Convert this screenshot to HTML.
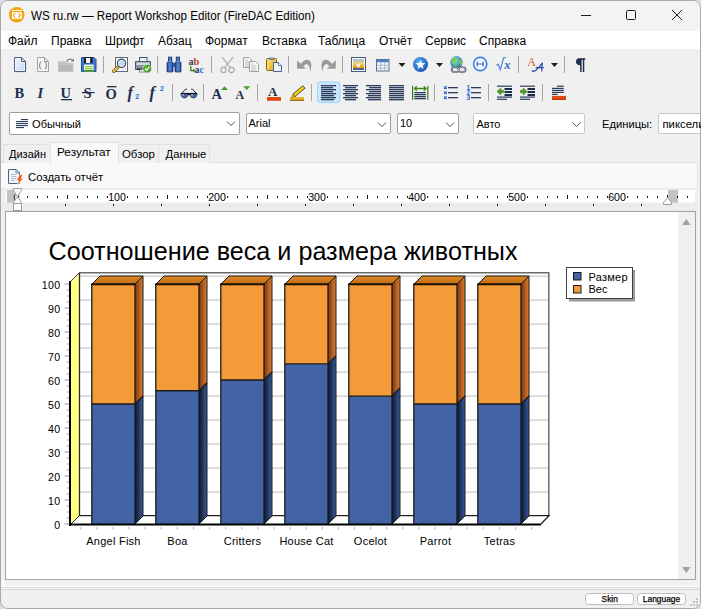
<!DOCTYPE html>
<html><head><meta charset="utf-8">
<style>
html,body{margin:0;padding:0;width:701px;height:609px;overflow:hidden;background:#dcdcdc;}
body{position:relative;font-family:"Liberation Sans",sans-serif;color:#000;}
.a{position:absolute;}
.t{position:absolute;white-space:nowrap;font-size:12px;line-height:14px;}
#win{position:absolute;left:0;top:0;width:699px;height:607px;border:1px solid #a9a9a9;border-radius:8px 8px 8px 8px;background:#f0f0f0;overflow:hidden;}
svg{position:absolute;left:0;top:0;}
</style></head><body>
<div id="win">
<svg width="701" height="609" style="left:-1px;top:-1px"><rect x="1" y="1" width="699" height="30" fill="#f3f3f3"/><rect x="1" y="31" width="699" height="18" fill="#ffffff"/><circle cx="16.7" cy="14.7" r="7.8" fill="#f5a50f"/><rect x="12" y="10" width="9.8" height="1" fill="#fff"/><rect x="12" y="12.2" width="9.8" height="6.6" fill="#fff"/><path d="M15.4 13.3L13.4 15.5L15.4 17.6M18.4 13.3L20.4 15.5L18.4 17.6" stroke="#f5a50f" stroke-width="1.1" fill="none"/><rect x="581" y="15" width="10" height="1" fill="#1b1b1b"/><rect x="626.5" y="10.5" width="9" height="9" rx="1" fill="none" stroke="#1b1b1b" stroke-width="1"/><path d="M672 10L682 20M682 10L672 20" stroke="#1b1b1b" stroke-width="1"/><rect x="103" y="56" width="1" height="17" fill="#a5a5a5"/><rect x="157" y="56" width="1" height="17" fill="#a5a5a5"/><rect x="211" y="56" width="1" height="17" fill="#a5a5a5"/><rect x="288" y="56" width="1" height="17" fill="#a5a5a5"/><rect x="342" y="56" width="1" height="17" fill="#a5a5a5"/><rect x="518" y="56" width="1" height="17" fill="#a5a5a5"/><rect x="564" y="56" width="1" height="17" fill="#a5a5a5"/><rect x="172" y="84" width="1" height="17" fill="#a5a5a5"/><rect x="203" y="84" width="1" height="17" fill="#a5a5a5"/><rect x="257" y="84" width="1" height="17" fill="#a5a5a5"/><rect x="311" y="84" width="1" height="17" fill="#a5a5a5"/><rect x="434" y="84" width="1" height="17" fill="#a5a5a5"/><rect x="488" y="84" width="1" height="17" fill="#a5a5a5"/><rect x="542" y="84" width="1" height="17" fill="#a5a5a5"/><defs>
<linearGradient id="gDoc" x1="0" y1="0" x2="1" y2="1"><stop offset="0" stop-color="#f4f9fd"/><stop offset="1" stop-color="#bcd6ec"/></linearGradient>
<linearGradient id="gImg" x1="0" y1="0" x2="0" y2="1"><stop offset="0" stop-color="#9cc3e6"/><stop offset="0.45" stop-color="#f7d36a"/><stop offset="0.7" stop-color="#f39a2a"/><stop offset="1" stop-color="#e0701a"/></linearGradient>
<radialGradient id="gStar" cx="0.4" cy="0.35" r="0.7"><stop offset="0" stop-color="#5ab0f5"/><stop offset="1" stop-color="#1350b8"/></radialGradient>
<radialGradient id="gGlobe" cx="0.4" cy="0.35" r="0.7"><stop offset="0" stop-color="#a6e27a"/><stop offset="0.5" stop-color="#4aa8d8"/><stop offset="1" stop-color="#2b6aa8"/></radialGradient>
<linearGradient id="gBin" x1="0" y1="0" x2="1" y2="0"><stop offset="0" stop-color="#1c3f8a"/><stop offset="0.5" stop-color="#5d8fd8"/><stop offset="1" stop-color="#1c3f8a"/></linearGradient>
<linearGradient id="gSideO" x1="0" y1="0" x2="1" y2="0"><stop offset="0" stop-color="#7a3410"/><stop offset="1" stop-color="#dc8030"/></linearGradient>
<linearGradient id="gSideB" x1="0" y1="0" x2="1" y2="0"><stop offset="0" stop-color="#0c1630"/><stop offset="1" stop-color="#3a5a9c"/></linearGradient>
<linearGradient id="gTopO" x1="0" y1="0" x2="0" y2="1"><stop offset="0" stop-color="#e08a28"/><stop offset="1" stop-color="#c06a14"/></linearGradient>
<linearGradient id="gClip" x1="0" y1="0" x2="1" y2="1"><stop offset="0" stop-color="#fbe28a"/><stop offset="1" stop-color="#d9a322"/></linearGradient>
</defs><path d="M14.5 57.5H21.5L25.5 61.5V71.5H14.5Z" fill="url(#gDoc)" stroke="#4d6283"/><path d="M15.5 58.5H21V62H24.5V70.5H15.5Z" fill="none" stroke="#ffffff" stroke-width="0.8" opacity="0.8"/><path d="M21.5 57.5V61.5H25.5Z" fill="#e9f1f8" stroke="#4d6283"/><path d="M15 72.3H26.2V62" fill="none" stroke="#000" stroke-opacity="0.08"/><path d="M37.5 57.5H44.5L48.5 61.5V71.5H37.5Z" fill="#f7f7f7" stroke="#a3a3a3"/><path d="M44.5 57.5V61.5H48.5Z" fill="#fdfdfd" stroke="#a3a3a3"/><path d="M41.3 61.8Q39.9 61.8 39.9 63.3V64.7L39 65.4L39.9 66.1V67.5Q39.9 69 41.3 69M44.7 61.8Q46.1 61.8 46.1 63.3V64.7L47 65.4L46.1 66.1V67.5Q46.1 69 44.7 69" fill="none" stroke="#6e6e6e" stroke-width="1"/><path d="M58 72V61.2H65L66.5 63H73.3V72Z" fill="#c2c2c2"/><path d="M58.5 71.5V64.5H72.8V71.5Z" fill="#b8b8b8" stroke="#c9c9c9" stroke-width="0.8"/><path d="M67 62.3A3 3 0 0 1 72.6 60.6" fill="none" stroke="#7c7c7c" stroke-width="1.2"/><path d="M70.6 61.6H74V58.6Z" fill="#7c7c7c"/><path d="M81.5 57.5H94L96 59.5V71.5H81.5Z" fill="#3d7ad2" stroke="#214f9a"/><rect x="84" y="57.3" width="8.6" height="6" fill="#1b1b1b"/><rect x="86" y="58" width="4.2" height="5" fill="#f4f4f4"/><rect x="84" y="64.6" width="9.5" height="7" fill="#f6fbf0"/><rect x="85" y="66" width="7.6" height="1.3" fill="#8ccc3a"/><rect x="85" y="68" width="7.6" height="1.3" fill="#8ccc3a"/><rect x="84" y="70" width="9.5" height="1.7" fill="#3f8a1a"/><rect x="115.5" y="57.5" width="12" height="14" fill="#fbfbfb" stroke="#5f6b7c"/><rect x="117" y="59" width="9" height="11" fill="#eef3f8"/><circle cx="121.5" cy="63.3" r="4.2" fill="#cfe3f2" stroke="#3e4a5a" stroke-width="1.1"/><path d="M121 62.3H124M119.5 64H123.5" stroke="#a9c6de" stroke-width="0.8"/><path d="M117.6 67.4L113.8 71.2" stroke="#6a5010" stroke-width="3.4" stroke-linecap="round"/><path d="M117.6 67.4L113.8 71.2" stroke="#f1c545" stroke-width="2" stroke-linecap="round"/><rect x="139.5" y="57.5" width="7.5" height="5" fill="#e9f2fa" stroke="#4f5a68"/><path d="M135.5 61.5H150.5V69.5H135.5Z" fill="#8794a3" stroke="#4f5a68"/><rect x="136.5" y="62.5" width="13" height="2.5" fill="#d3dae2"/><rect x="137" y="68.5" width="10" height="1.5" fill="#1c1c1c"/><rect x="139.5" y="69.5" width="7" height="2.5" fill="#f4f8fb" stroke="#5a6470" stroke-width="0.8"/><circle cx="147.2" cy="68.7" r="4.3" fill="#3f9a24" stroke="#e9f5e0" stroke-width="0.6"/><circle cx="146.5" cy="67.5" r="2.5" fill="#6cc440" opacity="0.6"/><path d="M145 68.8L146.7 70.4L149.4 67.2" stroke="#fff" stroke-width="1.2" fill="none"/><rect x="167" y="62" width="6" height="10" rx="0.8" fill="url(#gBin)" stroke="#0f2a66" stroke-width="0.7"/><rect x="175" y="62" width="6" height="10" rx="0.8" fill="url(#gBin)" stroke="#0f2a66" stroke-width="0.7"/><rect x="168.3" y="57" width="3.6" height="5.5" fill="url(#gBin)" stroke="#0f2a66" stroke-width="0.6"/><rect x="176.1" y="57" width="3.6" height="5.5" fill="url(#gBin)" stroke="#0f2a66" stroke-width="0.6"/><rect x="172.8" y="63" width="2.4" height="4" fill="#2a5ab0"/><path d="M167.5 61.8H172.7M175.3 61.8H180.5" stroke="#9cc0f0" stroke-width="0.7"/><text x="188.5" y="64.5" font-family="Liberation Serif" font-weight="bold" font-size="10" fill="#2a3a5c">a</text><text x="193.4" y="64.5" font-family="Liberation Serif" font-size="10.5" font-weight="bold" fill="#c2461a">b</text><path d="M190.8 66V70.6H193.8" stroke="#2e8a12" stroke-width="1.3" fill="none"/><path d="M193.3 68.6L195.6 70.6L193.3 72.6Z" fill="#2e8a12"/><text x="194.6" y="72.8" font-family="Liberation Serif" font-weight="bold" font-size="10" fill="#2a3a5c">a</text><text x="199.5" y="72.8" font-family="Liberation Serif" font-weight="bold" font-size="10" fill="#3a70d8">c</text><path d="M222 57L230.5 68M233 57L224.5 68" stroke="#a8a8a8" stroke-width="1.2"/><circle cx="223.5" cy="70" r="2.6" fill="none" stroke="#a8a8a8" stroke-width="1.1"/><circle cx="231.5" cy="70" r="2.6" fill="none" stroke="#a8a8a8" stroke-width="1.1"/><path d="M243.5 57.5H249L251.5 60V67.5H243.5Z" fill="#fafafa" stroke="#a0a0a0"/><path d="M249.5 61.5H255.5L258.5 64.5V71.5H249.5Z" fill="#fafafa" stroke="#a0a0a0"/><path d="M245 60H248M245 62H249.5M245 64H249M245 66H249M251 64H254M251 66H256.5M251 68H256.5M251 70H256.5" stroke="#adadad" stroke-width="0.8"/><rect x="266.5" y="58.5" width="10" height="12" rx="1" fill="url(#gClip)" stroke="#8a6410"/><rect x="267.5" y="59.5" width="1.2" height="10" fill="#ffe23a"/><path d="M269.5 59.5V58H273.5V59.5Z" fill="#9fb4cc" stroke="#5a6d89" stroke-width="0.8"/><path d="M273.5 62.5H278.5L281.5 65.5V71.5H273.5Z" fill="#eef5fb" stroke="#4d6283"/><path d="M278.5 62.5V65.5H281.5" fill="#fff" stroke="#4d6283" stroke-width="0.8"/><path d="M297 60.2V68.8H306Z" fill="#9c9c9c"/><path d="M300.5 64.2Q305.5 57.6 309.8 60.8Q312.6 63.6 310.2 72Q310 66.5 307.8 64.6Q305.6 62.8 303.4 66.6Z" fill="#9a9a9a"/><path d="M335.8 60.2V68.8H326.8Z" fill="#9c9c9c"/><path d="M332.3 64.2Q327.3 57.6 323 60.8Q320.2 63.6 322.6 72Q322.8 66.5 325 64.6Q327.2 62.8 329.4 66.6Z" fill="#9a9a9a"/><rect x="351.5" y="57.5" width="14" height="14" fill="#ffffff" stroke="#4a5a72"/><rect x="353" y="59" width="11" height="11" fill="url(#gImg)"/><rect x="353" y="68.3" width="11" height="1.7" fill="#2f5f9a"/><circle cx="358.5" cy="65.4" r="1.8" fill="#fffbe0"/><rect x="376.5" y="59.5" width="12.5" height="11.5" fill="#f4f8fc" stroke="#5d6f8c"/><rect x="377" y="60" width="11.5" height="2.3" fill="#4c7fd0"/><path d="M377 65.3H388.5M377 68.2H388.5M380.8 62.3V70.5M384.7 62.3V70.5" stroke="#9fb0c8" stroke-width="0.9"/><path d="M398.5 63H405.5L402.0 67Z" fill="#1e1e1e"/><path d="M436 63H443L439.5 67Z" fill="#1e1e1e"/><path d="M551 63H558L554.5 67Z" fill="#1e1e1e"/><circle cx="420.5" cy="64.5" r="7.5" fill="url(#gStar)"/><path d="M420.50 59.70L421.79 63.12L425.45 63.29L422.59 65.58L423.56 69.11L420.50 67.10L417.44 69.11L418.41 65.58L415.55 63.29L419.21 63.12Z" fill="#fff"/><circle cx="456.4" cy="62.3" r="6.2" fill="url(#gGlobe)"/><path d="M452 59.5Q454.5 57.2 457.5 58.5Q456.5 61 454 61.5Q453.5 63.5 451.5 64Z M459.5 59.5Q462 60.5 462.5 63.5Q461 65.5 459.5 64.5Q460.5 62 459.5 59.5Z M453.5 64.5Q456 64 457.5 66.5L455 67.5Z" fill="#7ccf3a"/><rect x="451.8" y="67.2" width="7" height="4.8" rx="2.4" fill="none" stroke="#1d2a40" stroke-width="1.6"/><rect x="458.6" y="67.2" width="7" height="4.8" rx="2.4" fill="none" stroke="#1d2a40" stroke-width="1.6"/><rect x="451.8" y="67.2" width="7" height="4.8" rx="2.4" fill="none" stroke="#fff" stroke-width="0.6"/><rect x="458.6" y="67.2" width="7" height="4.8" rx="2.4" fill="none" stroke="#fff" stroke-width="0.6"/><ellipse cx="480.2" cy="64" rx="6.6" ry="6.8" fill="#f6f9fd" stroke="#2f7ae0" stroke-width="1.5"/><path d="M477.3 61.6V66.4M483.1 61.6V66.4M477.3 64H483.1" stroke="#2a66c8" stroke-width="1.2"/><path d="M496.3 65.2L498.2 64.3L500.3 69.8L503.6 57.8H506" fill="none" stroke="#3a80d8" stroke-width="1.1"/><text x="504.3" y="69.3" font-family="Liberation Serif" font-style="italic" font-weight="bold" font-size="12.5" fill="#2f6ac0">x</text><text x="527.3" y="66" font-family="Liberation Serif" font-size="12" fill="#e05a18">A</text><path d="M531.8 70.3Q533.5 72.2 536 70.3Q538.5 67.5 542.5 62.8Q541.5 67 541.8 71.5M535.6 67.6H543.8" fill="none" stroke="#2448a8" stroke-width="1.2"/><path d="M579 58.3H585.3V59.8H584.3V71.9H582.8V59.8H581.6V71.9H580.1V65.2Q576 65.2 576 61.8Q576 58.3 579 58.3Z" fill="#1d2f4d"/><text x="14.5" y="98" font-family="Liberation Serif" font-weight="bold" font-size="14.5" fill="#1d2f4d">B</text><text x="37.5" y="98" font-family="Liberation Serif" font-style="italic" font-weight="bold" font-size="14.5" fill="#1d2f4d">I</text><text x="60.5" y="98" font-family="Liberation Serif" font-weight="bold" font-size="14.5" fill="#1d2f4d">U</text><rect x="61" y="99" width="11" height="1.3" fill="#1d2f4d"/><text x="83.5" y="98" font-family="Liberation Serif" font-weight="bold" font-size="14.5" fill="#1d2f4d">S</text><rect x="82" y="92" width="12.5" height="1.2" fill="#1d2f4d"/><text x="105.5" y="98.5" font-family="Liberation Serif" font-weight="bold" font-size="14.5" fill="#1d2f4d">O</text><rect x="107" y="86" width="9.5" height="1.3" fill="#1d2f4d"/><text x="127.5" y="98.2" font-family="Liberation Serif" font-style="italic" font-weight="bold" font-size="16.5" fill="#1d2f4d">f</text><text x="135.2" y="99.4" font-family="Liberation Sans" font-weight="bold" font-size="7" fill="#2470d0">2</text><text x="149.5" y="98.2" font-family="Liberation Serif" font-style="italic" font-weight="bold" font-size="16.5" fill="#1d2f4d">f</text><text x="160" y="90.8" font-family="Liberation Sans" font-weight="bold" font-size="7" fill="#2470d0">2</text><path d="M181 93.3H188Q188 97.9 184.5 97.9Q181 97.9 181 93.3Z" fill="#4a6aa8" stroke="#1a2a48" stroke-width="0.8"/><path d="M190 93.3H197Q197 97.9 193.5 97.9Q190 97.9 190 93.3Z" fill="#4a6aa8" stroke="#1a2a48" stroke-width="0.8"/><path d="M181 93.6H197M188 94.6H190" stroke="#0c1424" stroke-width="1.3"/><path d="M182 93L185.5 89.2H187M196 93L192.5 89.2H191" stroke="#1a2440" stroke-width="1" fill="none"/><circle cx="183" cy="95" r="0.8" fill="#c8d8f0"/><circle cx="192" cy="95" r="0.8" fill="#c8d8f0"/><text x="211.5" y="99" font-family="Liberation Serif" font-weight="bold" font-size="14.5" fill="#1d2f4d">A</text><path d="M221 90H228L224.5 86.2Z" fill="#46a020"/><text x="235.5" y="99" font-family="Liberation Serif" font-weight="bold" font-size="12" fill="#1d2f4d">A</text><path d="M243.3 86.2H250.3L246.8 90Z" fill="#46a020"/><text x="268" y="95.5" font-family="Liberation Serif" font-weight="bold" font-size="13" fill="#1d2f4d">A</text><rect x="267" y="97" width="14" height="3.8" fill="#e04a10"/><rect x="290" y="97" width="14" height="3.8" fill="#e6b422"/><rect x="290" y="99.8" width="14" height="1" fill="#8a5a18"/><path d="M292.8 94.2L302.8 85.8L305 88.2L295 96.6Z" fill="#f6d21c" stroke="#2a2410" stroke-width="0.8"/><path d="M292.8 94.2L291.8 97.2L295 96.6Z" fill="#e8c820" stroke="#6a5010" stroke-width="0.5"/><rect x="317.5" y="82" width="22.5" height="20.5" rx="2.5" fill="#cce8ff" stroke="#99d1ff"/><rect x="321.00" y="85.00" width="15.00" height="1.25" fill="#2a3d5c"/><rect x="321.50" y="86.25" width="15.00" height="0.5" fill="#2a3d5c" opacity="0.25"/><rect x="321.00" y="87.00" width="12.00" height="1.25" fill="#2a3d5c"/><rect x="321.50" y="88.25" width="12.00" height="0.5" fill="#2a3d5c" opacity="0.25"/><rect x="321.00" y="89.00" width="15.00" height="1.25" fill="#2a3d5c"/><rect x="321.50" y="90.25" width="15.00" height="0.5" fill="#2a3d5c" opacity="0.25"/><rect x="321.00" y="91.00" width="12.00" height="1.25" fill="#2a3d5c"/><rect x="321.50" y="92.25" width="12.00" height="0.5" fill="#2a3d5c" opacity="0.25"/><rect x="321.00" y="93.00" width="15.00" height="1.25" fill="#2a3d5c"/><rect x="321.50" y="94.25" width="15.00" height="0.5" fill="#2a3d5c" opacity="0.25"/><rect x="321.00" y="95.00" width="13.00" height="1.25" fill="#2a3d5c"/><rect x="321.50" y="96.25" width="13.00" height="0.5" fill="#2a3d5c" opacity="0.25"/><rect x="321.00" y="97.00" width="15.00" height="1.25" fill="#2a3d5c"/><rect x="321.50" y="98.25" width="15.00" height="0.5" fill="#2a3d5c" opacity="0.25"/><rect x="321.00" y="99.00" width="13.00" height="1.25" fill="#2a3d5c"/><rect x="321.50" y="100.25" width="13.00" height="0.5" fill="#2a3d5c" opacity="0.25"/><rect x="343.00" y="85.00" width="15.00" height="1.25" fill="#2a3d5c"/><rect x="343.50" y="86.25" width="15.00" height="0.5" fill="#2a3d5c" opacity="0.25"/><rect x="345.00" y="87.00" width="11.00" height="1.25" fill="#2a3d5c"/><rect x="345.50" y="88.25" width="11.00" height="0.5" fill="#2a3d5c" opacity="0.25"/><rect x="343.00" y="89.00" width="15.00" height="1.25" fill="#2a3d5c"/><rect x="343.50" y="90.25" width="15.00" height="0.5" fill="#2a3d5c" opacity="0.25"/><rect x="345.00" y="91.00" width="11.00" height="1.25" fill="#2a3d5c"/><rect x="345.50" y="92.25" width="11.00" height="0.5" fill="#2a3d5c" opacity="0.25"/><rect x="343.00" y="93.00" width="15.00" height="1.25" fill="#2a3d5c"/><rect x="343.50" y="94.25" width="15.00" height="0.5" fill="#2a3d5c" opacity="0.25"/><rect x="345.00" y="95.00" width="11.00" height="1.25" fill="#2a3d5c"/><rect x="345.50" y="96.25" width="11.00" height="0.5" fill="#2a3d5c" opacity="0.25"/><rect x="343.00" y="97.00" width="15.00" height="1.25" fill="#2a3d5c"/><rect x="343.50" y="98.25" width="15.00" height="0.5" fill="#2a3d5c" opacity="0.25"/><rect x="345.00" y="99.00" width="11.00" height="1.25" fill="#2a3d5c"/><rect x="345.50" y="100.25" width="11.00" height="0.5" fill="#2a3d5c" opacity="0.25"/><rect x="366.00" y="85.00" width="15.00" height="1.25" fill="#2a3d5c"/><rect x="366.50" y="86.25" width="15.00" height="0.5" fill="#2a3d5c" opacity="0.25"/><rect x="369.00" y="87.00" width="12.00" height="1.25" fill="#2a3d5c"/><rect x="369.50" y="88.25" width="12.00" height="0.5" fill="#2a3d5c" opacity="0.25"/><rect x="366.00" y="89.00" width="15.00" height="1.25" fill="#2a3d5c"/><rect x="366.50" y="90.25" width="15.00" height="0.5" fill="#2a3d5c" opacity="0.25"/><rect x="369.00" y="91.00" width="12.00" height="1.25" fill="#2a3d5c"/><rect x="369.50" y="92.25" width="12.00" height="0.5" fill="#2a3d5c" opacity="0.25"/><rect x="366.00" y="93.00" width="15.00" height="1.25" fill="#2a3d5c"/><rect x="366.50" y="94.25" width="15.00" height="0.5" fill="#2a3d5c" opacity="0.25"/><rect x="368.00" y="95.00" width="13.00" height="1.25" fill="#2a3d5c"/><rect x="368.50" y="96.25" width="13.00" height="0.5" fill="#2a3d5c" opacity="0.25"/><rect x="366.00" y="97.00" width="15.00" height="1.25" fill="#2a3d5c"/><rect x="366.50" y="98.25" width="15.00" height="0.5" fill="#2a3d5c" opacity="0.25"/><rect x="368.00" y="99.00" width="13.00" height="1.25" fill="#2a3d5c"/><rect x="368.50" y="100.25" width="13.00" height="0.5" fill="#2a3d5c" opacity="0.25"/><rect x="389.00" y="85.00" width="15.00" height="1.25" fill="#2a3d5c"/><rect x="389.50" y="86.25" width="15.00" height="0.5" fill="#2a3d5c" opacity="0.25"/><rect x="389.00" y="87.00" width="15.00" height="1.25" fill="#2a3d5c"/><rect x="389.50" y="88.25" width="15.00" height="0.5" fill="#2a3d5c" opacity="0.25"/><rect x="389.00" y="89.00" width="15.00" height="1.25" fill="#2a3d5c"/><rect x="389.50" y="90.25" width="15.00" height="0.5" fill="#2a3d5c" opacity="0.25"/><rect x="389.00" y="91.00" width="15.00" height="1.25" fill="#2a3d5c"/><rect x="389.50" y="92.25" width="15.00" height="0.5" fill="#2a3d5c" opacity="0.25"/><rect x="389.00" y="93.00" width="15.00" height="1.25" fill="#2a3d5c"/><rect x="389.50" y="94.25" width="15.00" height="0.5" fill="#2a3d5c" opacity="0.25"/><rect x="389.00" y="95.00" width="15.00" height="1.25" fill="#2a3d5c"/><rect x="389.50" y="96.25" width="15.00" height="0.5" fill="#2a3d5c" opacity="0.25"/><rect x="389.00" y="97.00" width="15.00" height="1.25" fill="#2a3d5c"/><rect x="389.50" y="98.25" width="15.00" height="0.5" fill="#2a3d5c" opacity="0.25"/><rect x="389.00" y="99.00" width="15.00" height="1.25" fill="#2a3d5c"/><rect x="389.50" y="100.25" width="15.00" height="0.5" fill="#2a3d5c" opacity="0.25"/><rect x="412" y="85.8" width="1.2" height="14" fill="#3a7a12"/><rect x="427.2" y="85.8" width="1.2" height="14" fill="#3a7a12"/><path d="M414.5 88.5H426M416.8 86.3L414.5 88.5L416.8 90.7M423.7 86.3L426 88.5L423.7 90.7" stroke="#3a8a14" stroke-width="1.3" fill="none"/><rect x="414.3" y="92.00" width="11.6" height="1.3" fill="#2a3d5c"/><rect x="414.3" y="94.00" width="11.6" height="1.3" fill="#2a3d5c"/><rect x="414.3" y="96.00" width="11.6" height="1.3" fill="#2a3d5c"/><rect x="414.3" y="98.00" width="11.6" height="1.3" fill="#2a3d5c"/><rect x="443.9" y="86.30" width="2.9" height="2.8" fill="#2a66d0"/><rect x="444.6" y="86.80" width="1.2" height="1.2" fill="#7fb0f0"/><rect x="448" y="87.00" width="10" height="1.3" fill="#2a3d5c"/><text x="466.6" y="90.00" font-family="Liberation Sans" font-weight="bold" font-size="6.6" fill="#2a66d0">1</text><rect x="471" y="87.00" width="10" height="1.3" fill="#2a3d5c"/><rect x="443.9" y="91.30" width="2.9" height="2.8" fill="#2a66d0"/><rect x="444.6" y="91.80" width="1.2" height="1.2" fill="#7fb0f0"/><rect x="448" y="92.00" width="10" height="1.3" fill="#2a3d5c"/><text x="466.6" y="95.00" font-family="Liberation Sans" font-weight="bold" font-size="6.6" fill="#2a66d0">2</text><rect x="471" y="92.00" width="10" height="1.3" fill="#2a3d5c"/><rect x="443.9" y="96.30" width="2.9" height="2.8" fill="#2a66d0"/><rect x="444.6" y="96.80" width="1.2" height="1.2" fill="#7fb0f0"/><rect x="448" y="97.00" width="10" height="1.3" fill="#2a3d5c"/><text x="466.6" y="100.00" font-family="Liberation Sans" font-weight="bold" font-size="6.6" fill="#2a66d0">3</text><rect x="471" y="97.00" width="10" height="1.3" fill="#2a3d5c"/><rect x="497" y="85.6" width="15" height="1.2" fill="#2a3d5c"/><rect x="504.5" y="88.00" width="7.5" height="2" fill="#1d2e4a"/><rect x="504.5" y="91.00" width="7.5" height="2" fill="#1d2e4a"/><rect x="504.5" y="94.00" width="7.5" height="2" fill="#1d2e4a"/><rect x="497" y="96.5" width="15" height="1.2" fill="#2a3d5c"/><rect x="497" y="98.7" width="10" height="1.2" fill="#2a3d5c"/><path d="M497 91.5L500.8 88V90.3H503.5V92.7H500.8V95Z" fill="#4aa21a" stroke="#2e6a10" stroke-width="0.5"/><rect x="520" y="85.6" width="15" height="1.2" fill="#2a3d5c"/><rect x="527.5" y="88.00" width="7.5" height="2" fill="#1d2e4a"/><rect x="527.5" y="91.00" width="7.5" height="2" fill="#1d2e4a"/><rect x="527.5" y="94.00" width="7.5" height="2" fill="#1d2e4a"/><rect x="520" y="96.5" width="15" height="1.2" fill="#2a3d5c"/><rect x="520" y="98.7" width="10" height="1.2" fill="#2a3d5c"/><path d="M527 91.5L523.2 88V90.3H520.5V92.7H523.2V95Z" fill="#4aa21a" stroke="#2e6a10" stroke-width="0.5"/><rect x="557" y="85.6" width="6.8" height="1.2" fill="#2a3d5c"/><rect x="552" y="87.80" width="11.8" height="1.2" fill="#2a3d5c"/><rect x="552" y="89.80" width="11.8" height="1.2" fill="#2a3d5c"/><rect x="552" y="91.80" width="11.8" height="1.2" fill="#2a3d5c"/><rect x="552" y="93.8" width="5.6" height="1.2" fill="#2a3d5c"/><rect x="552" y="95.9" width="14" height="3.9" fill="#e04a10"/><rect x="552" y="99" width="14" height="0.8" fill="#a83008"/><rect x="9.5" y="112.5" width="230" height="22" rx="1.5" fill="#fff" stroke="#a0a0a0"/><path d="M227 121.5L231 125.5L235 121.5" fill="none" stroke="#505050" stroke-width="1"/><rect x="246.5" y="113.5" width="144" height="20" rx="1.5" fill="#fff" stroke="#a0a0a0"/><path d="M378 122.5L382 126.5L386 122.5" fill="none" stroke="#505050" stroke-width="1"/><rect x="397.5" y="113.5" width="61" height="20" rx="1.5" fill="#fff" stroke="#a0a0a0"/><path d="M446 122.5L450 126.5L454 122.5" fill="none" stroke="#505050" stroke-width="1"/><rect x="473.5" y="113.5" width="111" height="20" rx="1.5" fill="#fff" stroke="#c8c8c8"/><path d="M572.5 122.5L576.5 126.5L580.5 122.5" fill="none" stroke="#505050" stroke-width="1"/><rect x="658.5" y="113.5" width="53" height="20" rx="1.5" fill="#fff" stroke="#c8c8c8"/><rect x="21" y="119.0" width="7" height="1.1" fill="#2a3e5e"/><rect x="16" y="121.0" width="12" height="1.1" fill="#2a3e5e"/><rect x="16" y="123.0" width="12" height="1.1" fill="#2a3e5e"/><rect x="16" y="125.0" width="12" height="1.1" fill="#2a3e5e"/><rect x="16" y="127.0" width="8" height="1.1" fill="#2a3e5e"/><rect x="1" y="162" width="697" height="26" fill="#f9f9f9"/><path d="M697.5 162V188" stroke="#e3e3e3"/><rect x="1" y="162" width="3" height="1" fill="#d9d9d9"/><path d="M3.5 163V144.5H50.5V163" fill="#f0f0f0" stroke="#e0e0e0"/><path d="M118.5 163V144.5H158.5V163" fill="#f0f0f0" stroke="#e0e0e0"/><path d="M158.5 163V144.5H209.5V163" fill="#f0f0f0" stroke="#e0e0e0"/><path d="M209.5 162.5H697" stroke="#e0e0e0"/><path d="M50.5 162V142.5H118.5V162" fill="#f9f9f9" stroke="#e0e0e0"/><path d="M8.5 169.5H16L19.5 173V183.5H8.5Z" fill="#f4f8fc" stroke="#4d6283"/><path d="M16 169.5V173H19.5Z" fill="#fff" stroke="#4d6283" stroke-width="0.8"/><path d="M11 174.5H16M11 176.5H16.5M11 178.5H16.5M11 180.5H15" stroke="#8aa0bc" stroke-width="0.7"/><path d="M19.6 174.8L16.6 180.6H18.8L17 185.3L23.2 178.4H20.8L23 174.8Z" fill="#f0560e" stroke="#fff" stroke-width="0.5"/><rect x="1" y="188" width="697" height="23" fill="#f0f0f0"/><rect x="1" y="188" width="697" height="2" fill="#ececec"/><rect x="6" y="190" width="689" height="12.7" fill="#ffffff"/><rect x="1" y="202.7" width="697" height="8.5" fill="#ececec"/><rect x="7" y="190" width="7" height="12.7" fill="#c2c2c2"/><rect x="668" y="190" width="10" height="12.7" fill="#c2c2c2"/><rect x="27" y="196" width="1" height="2" fill="#111"/><rect x="37" y="196" width="1" height="2" fill="#111"/><rect x="47" y="196" width="1" height="2" fill="#111"/><rect x="57" y="196" width="1" height="2" fill="#111"/><rect x="67" y="195" width="1" height="4" fill="#111"/><rect x="77" y="196" width="1" height="2" fill="#111"/><rect x="87" y="196" width="1" height="2" fill="#111"/><rect x="97" y="196" width="1" height="2" fill="#111"/><rect x="107" y="196" width="1" height="2" fill="#111"/><rect x="127" y="196" width="1" height="2" fill="#111"/><rect x="137" y="196" width="1" height="2" fill="#111"/><rect x="147" y="196" width="1" height="2" fill="#111"/><rect x="157" y="196" width="1" height="2" fill="#111"/><rect x="167" y="195" width="1" height="4" fill="#111"/><rect x="177" y="196" width="1" height="2" fill="#111"/><rect x="187" y="196" width="1" height="2" fill="#111"/><rect x="197" y="196" width="1" height="2" fill="#111"/><rect x="207" y="196" width="1" height="2" fill="#111"/><rect x="227" y="196" width="1" height="2" fill="#111"/><rect x="237" y="196" width="1" height="2" fill="#111"/><rect x="247" y="196" width="1" height="2" fill="#111"/><rect x="257" y="196" width="1" height="2" fill="#111"/><rect x="267" y="195" width="1" height="4" fill="#111"/><rect x="277" y="196" width="1" height="2" fill="#111"/><rect x="287" y="196" width="1" height="2" fill="#111"/><rect x="297" y="196" width="1" height="2" fill="#111"/><rect x="307" y="196" width="1" height="2" fill="#111"/><rect x="327" y="196" width="1" height="2" fill="#111"/><rect x="337" y="196" width="1" height="2" fill="#111"/><rect x="347" y="196" width="1" height="2" fill="#111"/><rect x="357" y="196" width="1" height="2" fill="#111"/><rect x="367" y="195" width="1" height="4" fill="#111"/><rect x="377" y="196" width="1" height="2" fill="#111"/><rect x="387" y="196" width="1" height="2" fill="#111"/><rect x="397" y="196" width="1" height="2" fill="#111"/><rect x="407" y="196" width="1" height="2" fill="#111"/><rect x="427" y="196" width="1" height="2" fill="#111"/><rect x="437" y="196" width="1" height="2" fill="#111"/><rect x="447" y="196" width="1" height="2" fill="#111"/><rect x="457" y="196" width="1" height="2" fill="#111"/><rect x="467" y="195" width="1" height="4" fill="#111"/><rect x="477" y="196" width="1" height="2" fill="#111"/><rect x="487" y="196" width="1" height="2" fill="#111"/><rect x="497" y="196" width="1" height="2" fill="#111"/><rect x="507" y="196" width="1" height="2" fill="#111"/><rect x="527" y="196" width="1" height="2" fill="#111"/><rect x="537" y="196" width="1" height="2" fill="#111"/><rect x="547" y="196" width="1" height="2" fill="#111"/><rect x="557" y="196" width="1" height="2" fill="#111"/><rect x="567" y="195" width="1" height="4" fill="#111"/><rect x="577" y="196" width="1" height="2" fill="#111"/><rect x="587" y="196" width="1" height="2" fill="#111"/><rect x="597" y="196" width="1" height="2" fill="#111"/><rect x="607" y="196" width="1" height="2" fill="#111"/><rect x="627" y="196" width="1" height="2" fill="#111"/><rect x="637" y="196" width="1" height="2" fill="#111"/><rect x="647" y="196" width="1" height="2" fill="#111"/><rect x="657" y="196" width="1" height="2" fill="#111"/><rect x="667" y="195" width="1" height="4" fill="#111"/><rect x="677" y="196" width="1" height="2" fill="#111"/><rect x="687" y="196" width="1" height="2" fill="#111"/><rect x="65" y="204" width="1" height="2" fill="#111"/><rect x="113" y="204" width="1" height="2" fill="#111"/><rect x="161" y="204" width="1" height="2" fill="#111"/><rect x="209" y="204" width="1" height="2" fill="#111"/><rect x="257" y="204" width="1" height="2" fill="#111"/><rect x="305" y="204" width="1" height="2" fill="#111"/><rect x="353" y="204" width="1" height="2" fill="#111"/><rect x="401" y="204" width="1" height="2" fill="#111"/><rect x="449" y="204" width="1" height="2" fill="#111"/><rect x="497" y="204" width="1" height="2" fill="#111"/><rect x="545" y="204" width="1" height="2" fill="#111"/><rect x="593" y="204" width="1" height="2" fill="#111"/><rect x="641" y="204" width="1" height="2" fill="#111"/><text x="16.5" y="200.8" text-anchor="middle" font-family="Liberation Sans" font-size="10.6" fill="#000">0</text><path d="M13.5 188.5H21.5V190.5L17.5 196.5L21.5 202.5V203.5H13.5V202.5L17.5 196.5L13.5 190.5Z" fill="#fbfbfb" stroke="#9a9a9a"/><rect x="13.5" y="203.5" width="8" height="7" fill="#fbfbfb" stroke="#9a9a9a"/><path d="M663.5 204.5H671.5V202.5L667.5 197.5L663.5 202.5Z" fill="#fbfbfb" stroke="#9a9a9a"/><rect x="5.5" y="211.5" width="690" height="368" fill="#ffffff" stroke="#a1a2a8"/><rect x="678" y="212" width="17" height="367" fill="#f0f0f0"/><path d="M682 225H690.5L686.25 219Z" fill="#a3a3a3"/><path d="M682 567H690.5L686.25 573Z" fill="#a3a3a3"/><rect x="1" y="580" width="699" height="4.7" fill="#f0f0f0"/><rect x="1" y="584.7" width="699" height="2.3" fill="#f9f9f9"/><rect x="1" y="587" width="699" height="1" fill="#dedede"/><rect x="1" y="588" width="699" height="1" fill="#f5f5f5"/><rect x="1" y="589" width="699" height="1" fill="#d6d6d6"/><rect x="1" y="590" width="699" height="18" fill="#f0f0f0"/><rect x="2" y="580" width="2.5" height="6" fill="#fafafa"/><rect x="585.5" y="593.5" width="48" height="11" rx="3" fill="#fff" stroke="#bdbdbd"/><rect x="637.5" y="593.5" width="48" height="11" rx="3" fill="#fff" stroke="#bdbdbd"/><rect x="696" y="598" width="2" height="2" fill="#c4c4c4"/><rect x="693" y="601" width="2" height="2" fill="#c4c4c4"/><rect x="696" y="601" width="2" height="2" fill="#c4c4c4"/><rect x="690" y="604" width="2" height="2" fill="#c4c4c4"/><rect x="693" y="604" width="2" height="2" fill="#c4c4c4"/><rect x="696" y="604" width="2" height="2" fill="#c4c4c4"/><text x="117" y="200.8" text-anchor="middle" font-family="Liberation Sans" font-size="10.6" fill="#000">100</text><text x="217" y="200.8" text-anchor="middle" font-family="Liberation Sans" font-size="10.6" fill="#000">200</text><text x="317" y="200.8" text-anchor="middle" font-family="Liberation Sans" font-size="10.6" fill="#000">300</text><text x="417" y="200.8" text-anchor="middle" font-family="Liberation Sans" font-size="10.6" fill="#000">400</text><text x="517" y="200.8" text-anchor="middle" font-family="Liberation Sans" font-size="10.6" fill="#000">500</text><text x="617" y="200.8" text-anchor="middle" font-family="Liberation Sans" font-size="10.6" fill="#000">600</text><text x="609.7" y="602.3" text-anchor="middle" font-family="Liberation Sans" font-size="8.4" fill="#000" stroke="#000" stroke-width="0.25">Skin</text><text x="661.5" y="602.3" text-anchor="middle" font-family="Liberation Sans" font-size="8.4" fill="#000" stroke="#000" stroke-width="0.25">Language</text><rect x="79" y="273" width="470" height="243" fill="#ffffff"/><rect x="79" y="491.2" width="470" height="1.9" fill="#dadada"/><path d="M71 500.0L79 492.0" stroke="#e8e8a0" stroke-width="1"/><rect x="79" y="467.2" width="470" height="1.9" fill="#dadada"/><path d="M71 476.0L79 468.0" stroke="#e8e8a0" stroke-width="1"/><rect x="79" y="443.2" width="470" height="1.9" fill="#dadada"/><path d="M71 452.0L79 444.0" stroke="#e8e8a0" stroke-width="1"/><rect x="79" y="419.2" width="470" height="1.9" fill="#dadada"/><path d="M71 428.0L79 420.0" stroke="#e8e8a0" stroke-width="1"/><rect x="79" y="395.2" width="470" height="1.9" fill="#dadada"/><path d="M71 404.0L79 396.0" stroke="#e8e8a0" stroke-width="1"/><rect x="79" y="371.2" width="470" height="1.9" fill="#dadada"/><path d="M71 380.0L79 372.0" stroke="#e8e8a0" stroke-width="1"/><rect x="79" y="347.2" width="470" height="1.9" fill="#dadada"/><path d="M71 356.0L79 348.0" stroke="#e8e8a0" stroke-width="1"/><rect x="79" y="323.2" width="470" height="1.9" fill="#dadada"/><path d="M71 332.0L79 324.0" stroke="#e8e8a0" stroke-width="1"/><rect x="79" y="299.2" width="470" height="1.9" fill="#dadada"/><path d="M71 308.0L79 300.0" stroke="#e8e8a0" stroke-width="1"/><rect x="79" y="275.2" width="470" height="1.9" fill="#dadada"/><path d="M71 284.0L79 276.0" stroke="#e8e8a0" stroke-width="1"/><path d="M79 272.7H548.8V516" fill="none" stroke="#6a6a6a" stroke-width="1.5"/><path d="M71 281L79 273V516L71 524Z" fill="#ffff80"/><path d="M71 500.0L79 492.0" stroke="#ffffd8" stroke-width="0.9"/><path d="M71 476.0L79 468.0" stroke="#ffffd8" stroke-width="0.9"/><path d="M71 452.0L79 444.0" stroke="#ffffd8" stroke-width="0.9"/><path d="M71 428.0L79 420.0" stroke="#ffffd8" stroke-width="0.9"/><path d="M71 404.0L79 396.0" stroke="#ffffd8" stroke-width="0.9"/><path d="M71 380.0L79 372.0" stroke="#ffffd8" stroke-width="0.9"/><path d="M71 356.0L79 348.0" stroke="#ffffd8" stroke-width="0.9"/><path d="M71 332.0L79 324.0" stroke="#ffffd8" stroke-width="0.9"/><path d="M71 308.0L79 300.0" stroke="#ffffd8" stroke-width="0.9"/><path d="M71 284.0L79 276.0" stroke="#ffffd8" stroke-width="0.9"/><path d="M79.5 273V516" stroke="#2a2a2a" stroke-width="1.3"/><path d="M70.5 281.5L79 273" stroke="#3a3a3a" stroke-width="1"/><path d="M71 524L79 516H549L541 524Z" fill="#ffffff"/><path d="M79 515.7H549L541 524" fill="none" stroke="#222" stroke-width="1.3"/><path d="M71 524L79 516" stroke="#222" stroke-width="1"/><rect x="92" y="404.00" width="43" height="120.00" fill="#4263a5"/><path d="M135 524L143 516V396.00L135 404.00Z" fill="url(#gSideB)"/><rect x="92" y="284.00" width="43" height="120.00" fill="#f29b38"/><path d="M135 404.00L143 396.00V276.00L135 284.00Z" fill="url(#gSideO)"/><path d="M92 284.00L100 276.00H143L135 284.00Z" fill="url(#gTopO)"/><path d="M91.8 524V284.00M135 284.00V524" fill="none" stroke="#1a1a1a" stroke-width="1.3"/><path d="M91.2 284.20H135.5" fill="none" stroke="#1a1206" stroke-width="1.9"/><path d="M92 284.00L100 276.00H143L135 284.00M143 276.00V516L135 524" fill="none" stroke="#1a1a1a" stroke-width="1"/><path d="M92 404.00H135L143 396.00" fill="none" stroke="#1a1a1a" stroke-width="1.4"/><rect x="156" y="390.80" width="43" height="133.20" fill="#4263a5"/><path d="M199 524L207 516V382.80L199 390.80Z" fill="url(#gSideB)"/><rect x="156" y="284.00" width="43" height="106.80" fill="#f29b38"/><path d="M199 390.80L207 382.80V276.00L199 284.00Z" fill="url(#gSideO)"/><path d="M156 284.00L164 276.00H207L199 284.00Z" fill="url(#gTopO)"/><path d="M155.8 524V284.00M199 284.00V524" fill="none" stroke="#1a1a1a" stroke-width="1.3"/><path d="M155.2 284.20H199.5" fill="none" stroke="#1a1206" stroke-width="1.9"/><path d="M156 284.00L164 276.00H207L199 284.00M207 276.00V516L199 524" fill="none" stroke="#1a1a1a" stroke-width="1"/><path d="M156 390.80H199L207 382.80" fill="none" stroke="#1a1a1a" stroke-width="1.4"/><rect x="221" y="380.00" width="43" height="144.00" fill="#4263a5"/><path d="M264 524L272 516V372.00L264 380.00Z" fill="url(#gSideB)"/><rect x="221" y="284.00" width="43" height="96.00" fill="#f29b38"/><path d="M264 380.00L272 372.00V276.00L264 284.00Z" fill="url(#gSideO)"/><path d="M221 284.00L229 276.00H272L264 284.00Z" fill="url(#gTopO)"/><path d="M220.8 524V284.00M264 284.00V524" fill="none" stroke="#1a1a1a" stroke-width="1.3"/><path d="M220.2 284.20H264.5" fill="none" stroke="#1a1206" stroke-width="1.9"/><path d="M221 284.00L229 276.00H272L264 284.00M272 276.00V516L264 524" fill="none" stroke="#1a1a1a" stroke-width="1"/><path d="M221 380.00H264L272 372.00" fill="none" stroke="#1a1a1a" stroke-width="1.4"/><rect x="285" y="363.92" width="43" height="160.08" fill="#4263a5"/><path d="M328 524L336 516V355.92L328 363.92Z" fill="url(#gSideB)"/><rect x="285" y="284.00" width="43" height="79.92" fill="#f29b38"/><path d="M328 363.92L336 355.92V276.00L328 284.00Z" fill="url(#gSideO)"/><path d="M285 284.00L293 276.00H336L328 284.00Z" fill="url(#gTopO)"/><path d="M284.8 524V284.00M328 284.00V524" fill="none" stroke="#1a1a1a" stroke-width="1.3"/><path d="M284.2 284.20H328.5" fill="none" stroke="#1a1206" stroke-width="1.9"/><path d="M285 284.00L293 276.00H336L328 284.00M336 276.00V516L328 524" fill="none" stroke="#1a1a1a" stroke-width="1"/><path d="M285 363.92H328L336 355.92" fill="none" stroke="#1a1a1a" stroke-width="1.4"/><rect x="349" y="396.08" width="43" height="127.92" fill="#4263a5"/><path d="M392 524L400 516V388.08L392 396.08Z" fill="url(#gSideB)"/><rect x="349" y="284.00" width="43" height="112.08" fill="#f29b38"/><path d="M392 396.08L400 388.08V276.00L392 284.00Z" fill="url(#gSideO)"/><path d="M349 284.00L357 276.00H400L392 284.00Z" fill="url(#gTopO)"/><path d="M348.8 524V284.00M392 284.00V524" fill="none" stroke="#1a1a1a" stroke-width="1.3"/><path d="M348.2 284.20H392.5" fill="none" stroke="#1a1206" stroke-width="1.9"/><path d="M349 284.00L357 276.00H400L392 284.00M400 276.00V516L392 524" fill="none" stroke="#1a1a1a" stroke-width="1"/><path d="M349 396.08H392L400 388.08" fill="none" stroke="#1a1a1a" stroke-width="1.4"/><rect x="414" y="404.00" width="43" height="120.00" fill="#4263a5"/><path d="M457 524L465 516V396.00L457 404.00Z" fill="url(#gSideB)"/><rect x="414" y="284.00" width="43" height="120.00" fill="#f29b38"/><path d="M457 404.00L465 396.00V276.00L457 284.00Z" fill="url(#gSideO)"/><path d="M414 284.00L422 276.00H465L457 284.00Z" fill="url(#gTopO)"/><path d="M413.8 524V284.00M457 284.00V524" fill="none" stroke="#1a1a1a" stroke-width="1.3"/><path d="M413.2 284.20H457.5" fill="none" stroke="#1a1206" stroke-width="1.9"/><path d="M414 284.00L422 276.00H465L457 284.00M465 276.00V516L457 524" fill="none" stroke="#1a1a1a" stroke-width="1"/><path d="M414 404.00H457L465 396.00" fill="none" stroke="#1a1a1a" stroke-width="1.4"/><rect x="478" y="404.00" width="43" height="120.00" fill="#4263a5"/><path d="M521 524L529 516V396.00L521 404.00Z" fill="url(#gSideB)"/><rect x="478" y="284.00" width="43" height="120.00" fill="#f29b38"/><path d="M521 404.00L529 396.00V276.00L521 284.00Z" fill="url(#gSideO)"/><path d="M478 284.00L486 276.00H529L521 284.00Z" fill="url(#gTopO)"/><path d="M477.8 524V284.00M521 284.00V524" fill="none" stroke="#1a1a1a" stroke-width="1.3"/><path d="M477.2 284.20H521.5" fill="none" stroke="#1a1206" stroke-width="1.9"/><path d="M478 284.00L486 276.00H529L521 284.00M529 276.00V516L521 524" fill="none" stroke="#1a1a1a" stroke-width="1"/><path d="M478 404.00H521L529 396.00" fill="none" stroke="#1a1a1a" stroke-width="1.4"/><rect x="69" y="281" width="2" height="245" fill="#000"/><rect x="69" y="523.5" width="472" height="2" fill="#000"/><rect x="64.5" y="523.5" width="4.5" height="1" fill="#9a9a9a"/><text x="60.6" y="529.2" text-anchor="end" font-family="Liberation Sans" font-size="10.6" letter-spacing="0.4" fill="#000">0</text><rect x="64.5" y="499.5" width="4.5" height="1" fill="#9a9a9a"/><text x="60.6" y="505.2" text-anchor="end" font-family="Liberation Sans" font-size="10.6" letter-spacing="0.4" fill="#000">10</text><rect x="64.5" y="475.5" width="4.5" height="1" fill="#9a9a9a"/><text x="60.6" y="481.2" text-anchor="end" font-family="Liberation Sans" font-size="10.6" letter-spacing="0.4" fill="#000">20</text><rect x="64.5" y="451.5" width="4.5" height="1" fill="#9a9a9a"/><text x="60.6" y="457.2" text-anchor="end" font-family="Liberation Sans" font-size="10.6" letter-spacing="0.4" fill="#000">30</text><rect x="64.5" y="427.5" width="4.5" height="1" fill="#9a9a9a"/><text x="60.6" y="433.2" text-anchor="end" font-family="Liberation Sans" font-size="10.6" letter-spacing="0.4" fill="#000">40</text><rect x="64.5" y="403.5" width="4.5" height="1" fill="#9a9a9a"/><text x="60.6" y="409.2" text-anchor="end" font-family="Liberation Sans" font-size="10.6" letter-spacing="0.4" fill="#000">50</text><rect x="64.5" y="379.5" width="4.5" height="1" fill="#9a9a9a"/><text x="60.6" y="385.2" text-anchor="end" font-family="Liberation Sans" font-size="10.6" letter-spacing="0.4" fill="#000">60</text><rect x="64.5" y="355.5" width="4.5" height="1" fill="#9a9a9a"/><text x="60.6" y="361.2" text-anchor="end" font-family="Liberation Sans" font-size="10.6" letter-spacing="0.4" fill="#000">70</text><rect x="64.5" y="331.5" width="4.5" height="1" fill="#9a9a9a"/><text x="60.6" y="337.2" text-anchor="end" font-family="Liberation Sans" font-size="10.6" letter-spacing="0.4" fill="#000">80</text><rect x="64.5" y="307.5" width="4.5" height="1" fill="#9a9a9a"/><text x="60.6" y="313.2" text-anchor="end" font-family="Liberation Sans" font-size="10.6" letter-spacing="0.4" fill="#000">90</text><rect x="64.5" y="283.5" width="4.5" height="1" fill="#9a9a9a"/><text x="60.6" y="289.2" text-anchor="end" font-family="Liberation Sans" font-size="10.6" letter-spacing="0.4" fill="#000">100</text><rect x="66.3" y="517.5" width="2.7" height="1" fill="#a8a8a8"/><rect x="66.3" y="511.5" width="2.7" height="1" fill="#a8a8a8"/><rect x="66.3" y="505.5" width="2.7" height="1" fill="#a8a8a8"/><rect x="66.3" y="493.5" width="2.7" height="1" fill="#a8a8a8"/><rect x="66.3" y="487.5" width="2.7" height="1" fill="#a8a8a8"/><rect x="66.3" y="481.5" width="2.7" height="1" fill="#a8a8a8"/><rect x="66.3" y="469.5" width="2.7" height="1" fill="#a8a8a8"/><rect x="66.3" y="463.5" width="2.7" height="1" fill="#a8a8a8"/><rect x="66.3" y="457.5" width="2.7" height="1" fill="#a8a8a8"/><rect x="66.3" y="445.5" width="2.7" height="1" fill="#a8a8a8"/><rect x="66.3" y="439.5" width="2.7" height="1" fill="#a8a8a8"/><rect x="66.3" y="433.5" width="2.7" height="1" fill="#a8a8a8"/><rect x="66.3" y="421.5" width="2.7" height="1" fill="#a8a8a8"/><rect x="66.3" y="415.5" width="2.7" height="1" fill="#a8a8a8"/><rect x="66.3" y="409.5" width="2.7" height="1" fill="#a8a8a8"/><rect x="66.3" y="397.5" width="2.7" height="1" fill="#a8a8a8"/><rect x="66.3" y="391.5" width="2.7" height="1" fill="#a8a8a8"/><rect x="66.3" y="385.5" width="2.7" height="1" fill="#a8a8a8"/><rect x="66.3" y="373.5" width="2.7" height="1" fill="#a8a8a8"/><rect x="66.3" y="367.5" width="2.7" height="1" fill="#a8a8a8"/><rect x="66.3" y="361.5" width="2.7" height="1" fill="#a8a8a8"/><rect x="66.3" y="349.5" width="2.7" height="1" fill="#a8a8a8"/><rect x="66.3" y="343.5" width="2.7" height="1" fill="#a8a8a8"/><rect x="66.3" y="337.5" width="2.7" height="1" fill="#a8a8a8"/><rect x="66.3" y="325.5" width="2.7" height="1" fill="#a8a8a8"/><rect x="66.3" y="319.5" width="2.7" height="1" fill="#a8a8a8"/><rect x="66.3" y="313.5" width="2.7" height="1" fill="#a8a8a8"/><rect x="66.3" y="301.5" width="2.7" height="1" fill="#a8a8a8"/><rect x="66.3" y="295.5" width="2.7" height="1" fill="#a8a8a8"/><rect x="66.3" y="289.5" width="2.7" height="1" fill="#a8a8a8"/><rect x="80.3" y="527" width="1" height="2.5" fill="#b0b0b0"/><rect x="96.4" y="527" width="1" height="2.5" fill="#b0b0b0"/><rect x="112.5" y="527" width="1" height="2.5" fill="#b0b0b0"/><rect x="128.6" y="527" width="1" height="2.5" fill="#b0b0b0"/><rect x="144.7" y="527" width="1" height="2.5" fill="#b0b0b0"/><rect x="160.8" y="527" width="1" height="2.5" fill="#b0b0b0"/><rect x="176.9" y="527" width="1" height="2.5" fill="#b0b0b0"/><rect x="193.0" y="527" width="1" height="2.5" fill="#b0b0b0"/><rect x="209.1" y="527" width="1" height="2.5" fill="#b0b0b0"/><rect x="225.2" y="527" width="1" height="2.5" fill="#b0b0b0"/><rect x="241.3" y="527" width="1" height="2.5" fill="#b0b0b0"/><rect x="257.4" y="527" width="1" height="2.5" fill="#b0b0b0"/><rect x="273.5" y="527" width="1" height="2.5" fill="#b0b0b0"/><rect x="289.6" y="527" width="1" height="2.5" fill="#b0b0b0"/><rect x="305.7" y="527" width="1" height="2.5" fill="#b0b0b0"/><rect x="321.8" y="527" width="1" height="2.5" fill="#b0b0b0"/><rect x="337.9" y="527" width="1" height="2.5" fill="#b0b0b0"/><rect x="354.0" y="527" width="1" height="2.5" fill="#b0b0b0"/><rect x="370.1" y="527" width="1" height="2.5" fill="#b0b0b0"/><rect x="386.2" y="527" width="1" height="2.5" fill="#b0b0b0"/><rect x="402.3" y="527" width="1" height="2.5" fill="#b0b0b0"/><rect x="418.4" y="527" width="1" height="2.5" fill="#b0b0b0"/><rect x="434.5" y="527" width="1" height="2.5" fill="#b0b0b0"/><rect x="450.6" y="527" width="1" height="2.5" fill="#b0b0b0"/><rect x="466.7" y="527" width="1" height="2.5" fill="#b0b0b0"/><rect x="482.8" y="527" width="1" height="2.5" fill="#b0b0b0"/><rect x="498.9" y="527" width="1" height="2.5" fill="#b0b0b0"/><rect x="515.0" y="527" width="1" height="2.5" fill="#b0b0b0"/><rect x="531.1" y="527" width="1" height="2.5" fill="#b0b0b0"/><text x="113.5" y="545" text-anchor="middle" font-family="Liberation Sans" font-size="11" letter-spacing="0.25" fill="#000">Angel Fish</text><text x="177.5" y="545" text-anchor="middle" font-family="Liberation Sans" font-size="11" letter-spacing="0.25" fill="#000">Boa</text><text x="242.5" y="545" text-anchor="middle" font-family="Liberation Sans" font-size="11" letter-spacing="0.25" fill="#000">Critters</text><text x="306.5" y="545" text-anchor="middle" font-family="Liberation Sans" font-size="11" letter-spacing="0.25" fill="#000">House Cat</text><text x="370.5" y="545" text-anchor="middle" font-family="Liberation Sans" font-size="11" letter-spacing="0.25" fill="#000">Ocelot</text><text x="435.5" y="545" text-anchor="middle" font-family="Liberation Sans" font-size="11" letter-spacing="0.25" fill="#000">Parrot</text><text x="499.5" y="545" text-anchor="middle" font-family="Liberation Sans" font-size="11" letter-spacing="0.25" fill="#000">Tetras</text><text x="48.5" y="260.3" font-family="Liberation Sans" font-size="25" fill="#000" textLength="469" lengthAdjust="spacingAndGlyphs">Соотношение веса и размера животных</text><rect x="569" y="270" width="66" height="31.5" fill="#7a7a7a" opacity="0.75"/><rect x="566.5" y="267.5" width="66" height="31" fill="#fff" stroke="#404040"/><rect x="573.5" y="272.5" width="7.5" height="7.5" fill="#4263a5" stroke="#1a1a1a"/><rect x="573.5" y="285.5" width="7.5" height="7.5" fill="#f29b38" stroke="#1a1a1a"/><text x="588.5" y="280.6" font-family="Liberation Sans" font-size="11" letter-spacing="0.25" fill="#000">Размер</text><text x="588.5" y="293.2" font-family="Liberation Sans" font-size="11" fill="#000">Вес</text></svg>
</div>
<div class="t" style="left:31px;top:8.3px;font-size:12px;line-height:16px;color:#000;transform:scaleX(0.968);transform-origin:0 0;">WS ru.rw — Report Workshop Editor (FireDAC Edition)</div>
<div class="t" style="left:8px;top:34px;">Файл</div>
<div class="t" style="left:51px;top:34px;">Правка</div>
<div class="t" style="left:105px;top:34px;">Шрифт</div>
<div class="t" style="left:158px;top:34px;">Абзац</div>
<div class="t" style="left:205px;top:34px;">Формат</div>
<div class="t" style="left:262px;top:34px;">Вставка</div>
<div class="t" style="left:318px;top:34px;">Таблица</div>
<div class="t" style="left:379px;top:34px;">Отчёт</div>
<div class="t" style="left:425px;top:34px;">Сервис</div>
<div class="t" style="left:479px;top:34px;">Справка</div>
<div class="t" style="left:32px;top:118px;font-size:11.1px;line-height:12px;">Обычный</div>
<div class="t" style="left:248.5px;top:117px;font-size:11px;line-height:12px;">Arial</div>
<div class="t" style="left:400px;top:117px;font-size:11px;line-height:12px;">10</div>
<div class="t" style="left:476.5px;top:118px;font-size:11px;line-height:12px;">Авто</div>
<div class="t" style="left:602px;top:118px;font-size:11.2px;line-height:12px;">Единицы:</div>
<div class="t" style="left:662.5px;top:118px;font-size:11.3px;line-height:12px;">пиксели</div>
<div class="t" style="left:9px;top:147.5px;font-size:11px;line-height:12px;">Дизайн</div>
<div class="t" style="left:57px;top:145.7px;font-size:11.8px;line-height:12px;">Результат</div>
<div class="t" style="left:122px;top:147.5px;font-size:11.4px;line-height:12px;">Обзор</div>
<div class="t" style="left:165.5px;top:147.5px;font-size:11.3px;line-height:12px;">Данные</div>
<div class="t" style="left:28px;top:170.5px;font-size:11.4px;line-height:12px;">Создать отчёт</div>
</body></html>
